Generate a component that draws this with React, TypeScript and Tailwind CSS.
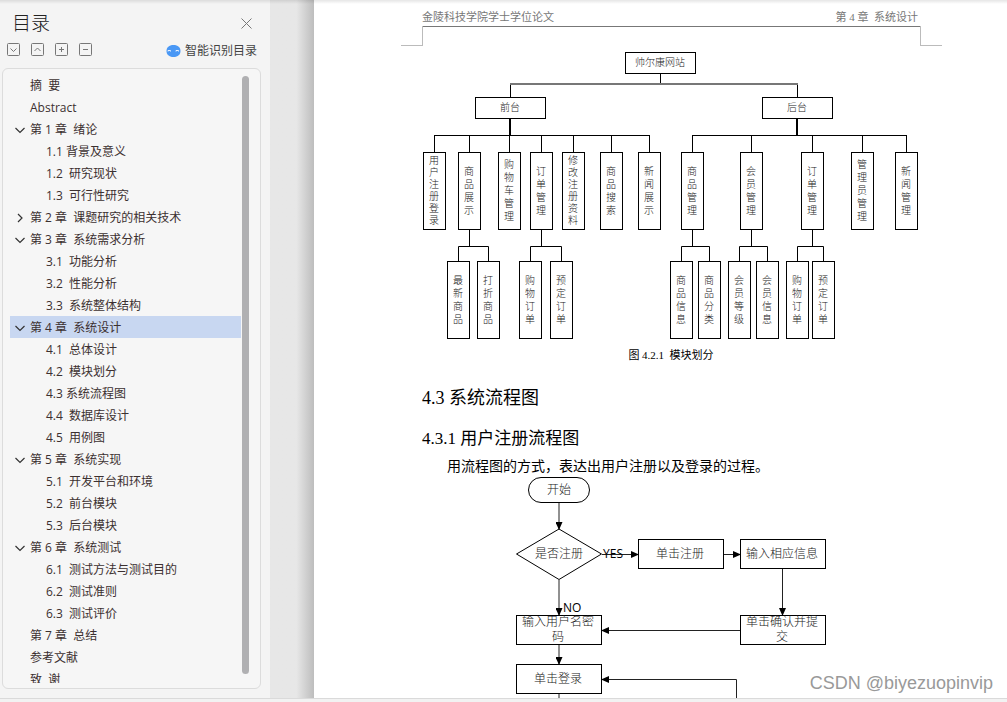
import { useState } from 'react'

type TocItem = {
    id: string
    label: string
    level: 1 | 2
    state?: 'open' | 'closed'
}

const tocItems: TocItem[] = [
    { id: 'zy', label: '摘  要', level: 1 },
    { id: 'abs', label: 'Abstract', level: 1 },
    { id: '1', label: '第 1 章  绪论', level: 1, state: 'open' },
    { id: '1.1', label: '1.1 背景及意义', level: 2 },
    { id: '1.2', label: '1.2  研究现状', level: 2 },
    { id: '1.3', label: '1.3  可行性研究', level: 2 },
    { id: '2', label: '第 2 章  课题研究的相关技术', level: 1, state: 'closed' },
    { id: '3', label: '第 3 章  系统需求分析', level: 1, state: 'open' },
    { id: '3.1', label: '3.1  功能分析', level: 2 },
    { id: '3.2', label: '3.2  性能分析', level: 2 },
    { id: '3.3', label: '3.3  系统整体结构', level: 2 },
    { id: '4', label: '第 4 章  系统设计', level: 1, state: 'open' },
    { id: '4.1', label: '4.1  总体设计', level: 2 },
    { id: '4.2', label: '4.2  模块划分', level: 2 },
    { id: '4.3', label: '4.3 系统流程图', level: 2 },
    { id: '4.4', label: '4.4  数据库设计', level: 2 },
    { id: '4.5', label: '4.5  用例图', level: 2 },
    { id: '5', label: '第 5 章  系统实现', level: 1, state: 'open' },
    { id: '5.1', label: '5.1  开发平台和环境', level: 2 },
    { id: '5.2', label: '5.2  前台模块', level: 2 },
    { id: '5.3', label: '5.3  后台模块', level: 2 },
    { id: '6', label: '第 6 章  系统测试', level: 1, state: 'open' },
    { id: '6.1', label: '6.1  测试方法与测试目的', level: 2 },
    { id: '6.2', label: '6.2  测试准则', level: 2 },
    { id: '6.3', label: '6.3  测试评价', level: 2 },
    { id: '7', label: '第 7 章  总结', level: 1 },
    { id: 'ref', label: '参考文献', level: 1 },
    { id: 'thx', label: '致  谢', level: 1 },
]

const toolButtons = [
    { label: '展开', d: 'M3.500 5.500l3 3 3-3' },
    { label: '收起', d: 'M3.500 8l3-3 3 3' },
    { label: '增加级别', d: 'M4 6.500h5M6.500 4v5' },
    { label: '减少级别', d: 'M4 6.500h5' },
]

type ModuleNode = {
    x: number
    label: string
    children?: { x: number; label: string }[]
}

const frontModules: ModuleNode[] = [
    { x: 1, label: '用户注册登录' },
    { x: 36, label: '商品展示', children: [{ x: 25, label: '最新商品' }, { x: 55, label: '打折商品' }] },
    { x: 76, label: '购物车管理' },
    { x: 108, label: '订单管理', children: [{ x: 97, label: '购物订单' }, { x: 128, label: '预定订单' }] },
    { x: 140, label: '修改注册资料' },
    { x: 178, label: '商品搜索' },
    { x: 216, label: '新闻展示' },
]

const backModules: ModuleNode[] = [
    { x: 259, label: '商品管理', children: [{ x: 248, label: '商品信息' }, { x: 276, label: '商品分类' }] },
    { x: 318, label: '会员管理', children: [{ x: 306, label: '会员等级' }, { x: 334, label: '会员信息' }] },
    { x: 379, label: '订单管理', children: [{ x: 364, label: '购物订单' }, { x: 390, label: '预定订单' }] },
    { x: 429, label: '管理员管理' },
    { x: 473, label: '新闻管理' },
]

// Tall box with one character per line
function TallBox({ x, y, label }: { x: number; y: number; label: string }) {
    const chars = label.split('')
    const pitch = chars.length > 5 ? 12 : 13
    const first = y + 39 - ((chars.length - 1) * pitch) / 2

    return (
        <g>
            <rect x={x + 0.5} y={y + 0.5} width="22" height="77" fill="#fff" stroke="#000" />
            <text textAnchor="middle" fontSize="10" fill="#222">
                {chars.map((char, i) => (
                    <tspan key={i} x={x + 11} y={first + i * pitch + 3}>
                        {char}
                    </tspan>
                ))}
            </text>
        </g>
    )
}

function WideBox({ x, y, label }: { x: number; y: number; label: string }) {
    return (
        <g>
            <rect x={x + 0.5} y={y + 0.5} width="70" height="21" fill="#fff" stroke="#000" />
            <text x={x + 35} y={y + 14} textAnchor="middle" fontSize="10" fill="#222">
                {label}
            </text>
        </g>
    )
}

function ModuleBranch({ modules, parentX }: { modules: ModuleNode[]; parentX: number }) {
    const left = modules[0].x + 11.5
    const right = modules[modules.length - 1].x + 11.5

    return (
        <g fill="none" stroke="none">
            <path d={`M${parentX} 68V85`} stroke="#000" strokeWidth="2" />
            <path d={`M${left} 102V85.5H${right}V102`} stroke="#000" />
            {modules.map((m) => (
                <g key={m.x}>
                    <path d={`M${m.x + 11.5} 85V102`} stroke="#000" />
                    {m.children && (
                        <>
                            <path d={`M${m.x + 11.5} 179V196`} stroke="#000" />
                            <path
                                d={`M${m.children[0].x + 11.5} 211V196.5H${m.children[1].x + 11.5}V211`}
                                stroke="#000"
                            />
                            {m.children.map((c) => (
                                <TallBox key={c.x} x={c.x} y={211} label={c.label} />
                            ))}
                        </>
                    )}
                    <TallBox x={m.x} y={102} label={m.label} />
                </g>
            ))}
        </g>
    )
}

function ModuleChart() {
    return (
        <svg width="498" height="292" viewBox="0 0 498 292" className="block font-light" role="img" aria-label="模块划分">
            <path d="M238.5 24V34" stroke="#000" />
            <path d="M88.5 47V34.5M375.5 34V47" stroke="#000" fill="none" />
            <path d="M88 34H376" stroke="#777" strokeWidth="2" />
            <WideBox x={203} y={2} label="帅尔康网站" />
            <ModuleBranch modules={frontModules} parentX={88} />
            <ModuleBranch modules={backModules} parentX={375} />
            <WideBox x={53} y={47} label="前台" />
            <WideBox x={340} y={47} label="后台" />
        </svg>
    )
}

function StepBox({ x, y, lines }: { x: number; y: number; lines: string[] }) {
    return (
        <g>
            <rect x={x + 0.5} y={y + 0.5} width="85" height="29" fill="#fff" stroke="#000" />
            <text textAnchor="middle" fontSize="12" fill="#222">
                {lines.map((line, i) => (
                    <tspan key={line} x={x + 42} y={lines.length > 1 ? y + 11 + i * 15 : y + 19}>
                        {line}
                    </tspan>
                ))}
            </text>
        </g>
    )
}

function FlowChart() {
    return (
        <svg width="498" height="222" viewBox="0 0 498 222" className="block" role="img" aria-label="用户注册流程图">
            <defs>
                <marker id="arrow" markerWidth="8" markerHeight="7" refX="7" refY="3.5" orient="auto" markerUnits="userSpaceOnUse">
                    <path d="M0 0L8 3.5 0 7z" />
                </marker>
            </defs>
            <rect x="106.5" y="1.5" width="61" height="25" rx="12.5" fill="#fff" stroke="#000" />
            <path d="M137 53L179.500 78 137 103.500 94.500 78z" fill="#fff" stroke="#000" />
            <g fill="none" stroke="#222">
                <path d="M137 27V53" markerEnd="url(#arrow)" />
                <path d="M137 104V139" markerEnd="url(#arrow)" />
                <path d="M137 169V188" markerEnd="url(#arrow)" />
                <path d="M180 78.500H216" markerEnd="url(#arrow)" />
                <path d="M302 78.500H318" markerEnd="url(#arrow)" />
                <path d="M360.500 93V139" markerEnd="url(#arrow)" />
                <path d="M318 154.500H180" markerEnd="url(#arrow)" />
                <path d="M314.500 222V203.500H180" markerEnd="url(#arrow)" />
                <path d="M137 218V222" />
            </g>
            <g className="font-['Open_Sans',sans-serif]" fontSize="12" fill="#000">
                <text x="181" y="82">YES</text>
                <text x="141" y="136">NO</text>
            </g>
            <g className="font-light">
                <g textAnchor="middle" fontSize="12" fill="#222">
                    <text x="137" y="18">开始</text>
                    <text x="137" y="82">是否注册</text>
                </g>
                <StepBox x={216} y={63} lines={['单击注册']} />
                <StepBox x={318} y={63} lines={['输入相应信息']} />
                <StepBox x={94} y={139} lines={['输入用户名密', '码']} />
                <StepBox x={318} y={139} lines={['单击确认并提', '交']} />
                <StepBox x={94} y={188} lines={['单击登录']} />
            </g>
        </svg>
    )
}

function Chevron({ state }: { state: 'open' | 'closed' }) {
    return (
        <svg width="10" height="10" viewBox="0 0 10 10" fill="none" stroke="#333" strokeWidth="1.2">
            <path d={state === 'open' ? 'M0.500 3L5 7.500 9.500 3' : 'M3 1L7 5 3 9'} />
        </svg>
    )
}

function Sidebar() {
    const [activeId, setActiveId] = useState('4')

    return (
        <aside className="flex w-[270px] shrink-0 flex-col bg-[#f4f4f4] pb-[9px]">
            <div className="flex h-10 items-center justify-between pt-1.5 pr-4 pl-3">
                <h1 className="text-[19px] leading-6 font-light text-[#222]">目录</h1>
                <button type="button" aria-label="关闭" className="p-0.5">
                    <svg width="11" height="11" viewBox="0 0 11 11" stroke="#777" fill="none">
                        <path d="M0.500 0.500l10 10M10.500 0.500l-10 10" />
                    </svg>
                </button>
            </div>
            <div className="flex h-7 items-start justify-between pr-[13px] pl-[7px]">
                <div className="flex gap-2.5 pt-[3px]">
                    {toolButtons.map((tool) => (
                        <button key={tool.label} type="button" aria-label={tool.label}>
                            <svg width="14" height="14" viewBox="0 0 14 14" fill="none" stroke="#777">
                                <rect x="0.5" y="0.5" width="12" height="12" rx="1" />
                                <path d={tool.d} />
                            </svg>
                        </button>
                    ))}
                </div>
                <button type="button" className="flex items-center gap-1 text-xs leading-[22px] text-[#444]">
                    <svg width="15" height="13" viewBox="0 0 15 13" className="shrink-0">
                        <path d="M7.500 0C3 0 0.500 2.500 0.500 6S3 12 7.500 12 14.500 9.500 14.500 6 12 0 7.500 0z" fill="#4a98f5" />
                        <path d="M2 6.500V5.500h2.500v1M10 6.500v-1h2.500v1" stroke="#e8f2ff" fill="none" />
                    </svg>
                    智能识别目录
                </button>
            </div>
            <nav className="mr-[9px] ml-0.5 flex min-h-0 flex-1 rounded-md border border-[#dcdcdc] bg-[#f6f6f6] py-[5px] pr-[11px] pl-[7px]">
                <ul className="min-w-0 flex-1 overflow-hidden">
                    {tocItems.map((item) => (
                        <li key={item.id}>
                            <button
                                type="button"
                                onClick={() => setActiveId(item.id)}
                                className={`flex h-[22px] w-full items-center pt-0.5 text-left text-xs whitespace-pre text-[#3c3030] ${
                                    item.id === activeId ? 'bg-[#c8d7f1]' : ''
                                } ${item.level === 2 ? 'pl-9' : 'pl-[5px]'}`}
                            >
                                {item.level === 1 && (
                                    <span className="w-[15px] shrink-0">{item.state && <Chevron state={item.state} />}</span>
                                )}
                                {item.label}
                            </button>
                        </li>
                    ))}
                </ul>
                <div className="ml-px w-[7px] pt-0.5 pb-[9px]">
                    <div className="h-full rounded-full bg-[#b0b0b2]" />
                </div>
            </nav>
        </aside>
    )
}

function DocumentPage() {
    return (
        <article className="min-w-0 flex-1 overflow-hidden bg-white pl-[108px] font-['Liberation_Serif','Noto_Sans_CJK_SC',serif] text-black">
            <div className="w-full max-w-[498px]">
                <header className="relative flex h-[27px] items-end justify-between border-b border-[#777] pr-0.5 pb-px text-[11px] leading-4 whitespace-pre text-[#777]">
                    <span>金陵科技学院学士学位论文</span>
                    <span>第 4 章  系统设计</span>
                    {/* crop marks hang outside the text area */}
                    <i className="absolute top-full -left-[21px] h-5 w-[22px] border-r border-b border-[#bbb]" />
                    <i className="absolute top-full -right-[22px] h-5 w-[22px] border-b border-l border-[#bbb]" />
                </header>
                <figure className="pt-[23px]">
                    <ModuleChart />
                    <figcaption className="pt-[3px] text-center text-[11px] leading-5 whitespace-pre">图 4.2.1  模块划分</figcaption>
                </figure>
                <h2 className="mt-[21px] text-lg leading-6">4.3 系统流程图</h2>
                <h3 className="mt-[17px] text-[17px] leading-6">4.3.1 用户注册流程图</h3>
                <p className="mt-[7px] pl-[25px] text-sm leading-[18px]">用流程图的方式，表达出用户注册以及登录的过程。</p>
                <FlowChart />
            </div>
        </article>
    )
}

export default function App() {
    return (
        <div className="relative flex h-screen flex-col overflow-hidden bg-[#e7e7e7] font-['Open_Sans','Noto_Sans_CJK_SC',sans-serif]">
            <main className="flex min-h-0 flex-1">
                <Sidebar />
                <div className="w-11 shrink-0 bg-linear-to-r from-[#e7e7e7] from-60% to-[#bdbdbd]" />
                <DocumentPage />
            </main>
            <footer className="h-1 shrink-0 border-t border-[#dadada] bg-[#f2f2f2]" />
            <div className="pointer-events-none absolute inset-x-0 top-0 h-1 bg-linear-to-b from-black/10 to-transparent" />
            <span className="absolute right-3.5 bottom-[7px] font-['Liberation_Sans',sans-serif] text-lg leading-6 text-[#999]">CSDN @biyezuopinvip</span>
        </div>
    )
}
